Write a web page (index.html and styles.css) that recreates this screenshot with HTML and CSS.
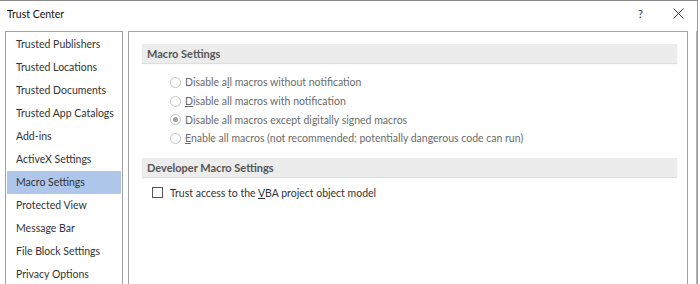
FILE: index.html
```html
<!DOCTYPE html>
<html>
<head>
<meta charset="utf-8">
<link rel="stylesheet" href="styles.css">
</head>
<body>
<div class="window">
  <div class="titlebar">
    <span class="title">Trust Center</span>
    <div class="controls">
      <span class="help">?</span>
      <svg class="close" width="11" height="11" viewBox="0 0 11 11"><path d="M0.5 0.5 L10.5 10.5 M10.5 0.5 L0.5 10.5" stroke="#333" stroke-width="1" fill="none"/></svg>
    </div>
  </div>
  <div class="content">
    <ul class="nav">
      <li>Trusted Publishers</li>
      <li>Trusted Locations</li>
      <li>Trusted Documents</li>
      <li>Trusted App Catalogs</li>
      <li>Add-ins</li>
      <li>ActiveX Settings</li>
      <li class="selected">Macro Settings</li>
      <li>Protected View</li>
      <li>Message Bar</li>
      <li>File Block Settings</li>
      <li>Privacy Options</li>
    </ul>
    <div class="panel">
      <div class="section-head">Macro Settings</div>
      <div class="options">
        <label class="radio"><span class="circle"></span><span>Disable a<u>l</u>l macros without notification</span></label>
        <label class="radio"><span class="circle"></span><span><u>D</u>isable all macros with notification</span></label>
        <label class="radio"><span class="circle checked"></span><span>Disable all macros except di<u>g</u>itally signed macros</span></label>
        <label class="radio"><span class="circle"></span><span><u>E</u>nable all macros (not recommended; potentially dangerous code can run)</span></label>
      </div>
      <div class="section-head">Developer Macro Settings</div>
      <label class="check"><span class="box"></span><span>Trust access to the <u>V</u>BA project object model</span></label>
    </div>
    <div class="edge"></div>
  </div>
</div>
</body>
</html>
```
FILE: styles.css
```css
* { box-sizing: border-box; }
html, body { margin: 0; padding: 0; background: #fff; }
body { font-family: "Lato", "Noto Sans", sans-serif; font-size: 10.5px; color: #222; width: 700px; height: 284px; overflow: hidden; }
.window { width: 698px; height: 284px; border-top: 1px solid #8a8a8a; border-right: 1px solid #9a9a9a; background: #fff; display: flex; flex-direction: column; overflow: hidden; }
.titlebar { flex-shrink: 0; height: 25px; display: flex; align-items: center; justify-content: space-between; padding: 0 0 0 7px; }
.title { font-size: 10.5px; color: #111; }
.controls { display: flex; align-items: center; }
.help { font-size: 11px; color: #333; margin-right: 30px; }
.close { margin-right: 13px; }
.content { flex: 1; min-height: 0; display: flex; padding: 5px 0 0 5px; gap: 5px; }
.nav { list-style: none; margin: 0; padding: 1px 1px 0 1px; width: 118px; border: 1px solid #a3a3a3; border-bottom: none; }
.nav li { height: 23px; line-height: 23px; padding-left: 9px; color: #333; white-space: nowrap; }
.nav li.selected { background: #adc6e9; }
.panel { flex: 1; border: 1px solid #a3a3a3; border-bottom: none; padding: 12px 10px 0 13px; }
.edge { width: 4px; border-right: 1px solid #b5b5b5; }
.section-head { height: 19px; line-height: 19px; background: #ececec; box-shadow: 0 1px 1px #dedede; font-weight: bold; font-size: 11px; color: #555; padding-left: 5px; }
.options { padding: 10px 0 10px 28px; }
.radio { display: flex; align-items: center; height: 18.7px; color: #6b6b6b; white-space: nowrap; }
.circle { width: 11px; height: 11px; border: 1px solid #c4c4c4; border-radius: 50%; margin-right: 4px; display: flex; align-items: center; justify-content: center; background: #fff; }
.circle.checked::after { content: ""; width: 5px; height: 5px; border-radius: 50%; background: #a0a0a0; }
.check { display: flex; align-items: center; margin: 10px 0 0 10px; color: #333; white-space: nowrap; }
.box { width: 11px; height: 11px; border: 1px solid #555; margin-right: 7px; background: #fff; }
u { text-decoration-thickness: 1px; text-underline-offset: 1px; }
```
